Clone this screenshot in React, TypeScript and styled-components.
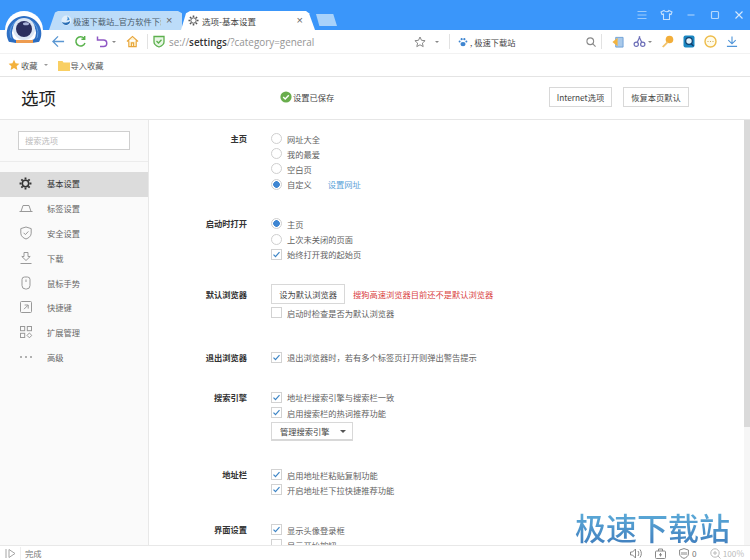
import React from 'react'
import styled, { createGlobalStyle } from 'styled-components'

const GlobalStyle = createGlobalStyle`
  html, body {
    margin: 0;
    padding: 0;
    background: #fff;
  }
  * {
    box-sizing: border-box;
  }
`

const sans = `"Noto Sans CJK SC", "Liberation Sans", sans-serif`

const Logo = () => (
  <LogoWrap>
    <svg width="40" height="36" viewBox="0 0 40 36">
      <circle cx="20" cy="19" r="19" fill="#fff" />
      <path d="M5 31 A17.300 17.300 0 1 1 35 31 L29 30 A12 12 0 1 0 11 30 Z" fill="#2f70c4" />
      <path d="M9 30.500 A14 14 0 1 1 31 30.500" fill="none" stroke="#5f9de0" strokeWidth="1" />
      <circle cx="20" cy="18" r="11" fill="#dbe6f4" />
      <circle cx="20" cy="18" r="8" fill="#2b2f5e" />
      <ellipse cx="22" cy="12.800" rx="3" ry="1.500" fill="#aab4d8" />
      <path d="M4 26 L12 29 L12 32 L6 31 Z M36 26 L28 29 L28 32 L34 31 Z" fill="#2a6cc0" />
      <rect x="12" y="29" width="17" height="3" fill="#ee9c50" />
    </svg>
  </LogoWrap>
)

const GearIcon = ({ size = 13, color = '#444', weight = 1.6 }: { size?: number; color?: string; weight?: number }) => (
  <svg width={size} height={size} viewBox="0 0 14 14">
    <circle cx="7" cy="7" r="3.400" fill="none" stroke={color} strokeWidth={weight} />
    <g stroke={color} strokeWidth="2">
      <path d="M7 .6v2.200M7 11.200v2.200M.6 7h2.200M11.200 7h2.200M2.500 2.500l1.500 1.500M10 10l1.500 1.500M2.500 11.500L4 10M10 4l1.500-1.500" />
    </g>
  </svg>
)

const navIcons: Record<string, React.ReactNode> = {
  gear: <GearIcon size={13} color="#333" />,
  tab: (
    <svg width="14" height="14" viewBox="0 0 14 14" fill="none" stroke="#999">
      <path d="M.5 10.500h13M2 10.500L4 4.500h6l2 6" />
    </svg>
  ),
  shield: (
    <svg width="14" height="14" viewBox="0 0 14 14" fill="none" stroke="#999">
      <path d="M7 1l5.200 1.600v4.600c0 3-2.600 4.900-5.200 5.800-2.600-.9-5.200-2.800-5.200-5.800V2.600zM4.600 6.800l1.800 1.800 3-3.200" />
    </svg>
  ),
  download: (
    <svg width="14" height="14" viewBox="0 0 14 14" fill="none" stroke="#999">
      <path d="M5 1.500h4v4h2.200L7 9.500 2.800 5.500H5zM1.500 12.500h11" />
    </svg>
  ),
  mouse: (
    <svg width="14" height="14" viewBox="0 0 14 14" fill="none" stroke="#999">
      <path d="M3 3.500A2.500 2.500 0 0 1 5.500 1h3A2.500 2.500 0 0 1 11 3.500v6a3.500 3.500 0 0 1-3.500 3.500h-1A3.500 3.500 0 0 1 3 9.500zM7 3.500v2.500" />
    </svg>
  ),
  key: (
    <svg width="14" height="14" viewBox="0 0 14 14" fill="none" stroke="#999">
      <rect x="1.500" y="1.500" width="11" height="11" rx="1" />
      <path d="M5 9.200L9 5.200M5.600 5h3.600v3.600" />
    </svg>
  ),
  ext: (
    <svg width="14" height="14" viewBox="0 0 14 14" fill="none" stroke="#999">
      <rect x="1.500" y="1.500" width="4.200" height="4.200" />
      <rect x="8.300" y="1.500" width="4.200" height="4.200" />
      <rect x="1.500" y="8.300" width="4.200" height="4.200" />
      <path d="M10.400 8l2.400 2.400-2.400 2.400L8 10.400z" />
    </svg>
  ),
  more: (
    <svg width="14" height="14" viewBox="0 0 14 14" fill="#999">
      <circle cx="2" cy="7" r="1" />
      <circle cx="7" cy="7" r="1" />
      <circle cx="12" cy="7" r="1" />
    </svg>
  ),
}

const navList = [
  { id: 1, icon: 'gear', text: '基本设置', active: true },
  { id: 2, icon: 'tab', text: '标签设置' },
  { id: 3, icon: 'shield', text: '安全设置' },
  { id: 4, icon: 'download', text: '下载' },
  { id: 5, icon: 'mouse', text: '鼠标手势' },
  { id: 6, icon: 'key', text: '快捷键' },
  { id: 7, icon: 'ext', text: '扩展管理' },
  { id: 8, icon: 'more', text: '高级' },
]

const Radio = ({ on, label, children }: { on?: boolean; label: string; children?: React.ReactNode }) => (
  <Row>
    <RadioMark $on={on} />
    <RowText>{label}</RowText>
    {children}
  </Row>
)

const Check = ({ on = true, label }: { on?: boolean; label: string }) => (
  <Row>
    <CheckMark>
      {on && (
        <svg width="9" height="9" viewBox="0 0 9 9" fill="none" stroke="#3d85c6" strokeWidth="1.200">
          <path d="M1.500 4.600l2 2 4-4.400" />
        </svg>
      )}
    </CheckMark>
    <RowText>{label}</RowText>
  </Row>
)

const App: React.FC = () => {
  return (
    <>
      <GlobalStyle />
      <Page>
        <Logo />
        <TitleBar>
          <Tabs>
            <BackTab>
              <svg width="11" height="11" viewBox="0 0 11 11">
                <circle cx="5.500" cy="5.500" r="5" fill="#dfeefb" />
                <path d="M1 7c2 1 6 1 8-1 .4 2.400-2 4-4 4-2 0-3.400-1.400-4-3z" fill="#2b6fb5" />
                <path d="M6 1.500c1 1 1 3-.5 4l3-.5c0-2-1-3-2.500-3.500z" fill="#3e8ed6" />
              </svg>
              <BackTabTitle>极速下载站_官方软件下载</BackTabTitle>
              <TabClose>×</TabClose>
            </BackTab>
            <ActiveTab>
              <GearIcon size={11} color="#555" weight={1.2} />
              <ActiveTabTitle>选项-基本设置</ActiveTabTitle>
              <TabClose>×</TabClose>
            </ActiveTab>
            <NewTab />
          </Tabs>
          <WindowButtons>
            <svg width="12" height="12" viewBox="0 0 12 12" stroke="#9ccbfb" fill="none">
              <path d="M1.500 2.500h9M1.500 6h9M1.500 9.500h9" />
            </svg>
            <svg width="13" height="12" viewBox="0 0 13 12" stroke="#c6e1fd" fill="none" strokeWidth="1.100">
              <path d="M4 1.500L1 3l1 2.500 1.500-.5v5.500h6V5l1.500.5 1-2.500-3-1.500c-.5 1.600-4 1.600-5 0z" />
            </svg>
            <svg width="12" height="12" viewBox="0 0 12 12" stroke="#b5d8fc" fill="none">
              <path d="M2.500 6h7" />
            </svg>
            <svg width="12" height="12" viewBox="0 0 12 12" stroke="#b5d8fc" fill="none" strokeWidth="1.200">
              <rect x="2.500" y="2.500" width="7" height="7" rx="1" />
            </svg>
            <svg width="12" height="12" viewBox="0 0 12 12" stroke="#d5e9fd" fill="none" strokeWidth="1.100">
              <path d="M2.500 2.500l7 7M9.500 2.500l-7 7" />
            </svg>
          </WindowButtons>
        </TitleBar>

        <ToolBar>
          <NavIcons>
            <svg width="13" height="13" viewBox="0 0 14 13" fill="none" stroke="#5a96d2" strokeWidth="1.400">
              <path d="M13 6.500H1.500M6.500 1L1 6.500 6.500 12" />
            </svg>
            <svg width="13" height="13" viewBox="0 0 14 14" fill="none" stroke="#59b24c" strokeWidth="1.600">
              <path d="M11.800 8.500A5 5 0 1 1 10.800 3.500M11.500 1v3.500H8" />
            </svg>
            <UndoGroup>
              <svg width="13" height="13" viewBox="0 0 13 13" fill="none" stroke="#8f57c4" strokeWidth="1.500">
                <path d="M1.500 1.500v3.500h6a3 3 0 0 1 0 6.500H4" />
              </svg>
              <Caret />
            </UndoGroup>
            <svg width="13" height="13" viewBox="0 0 14 14" fill="#fdf3d4" stroke="#e8a53a" strokeWidth="1.200">
              <path d="M1 7l6-5.500L13 7M3 5.500V12.500h8V5.500" />
              <path d="M5.800 12.500V8.500h2.400v4" fill="none" />
            </svg>
          </NavIcons>
          <VLine />
          <ShieldSlot>
            <svg width="12" height="13" viewBox="0 0 12 13" fill="#e9f7e6" stroke="#5db04e" strokeWidth="1.300">
              <path d="M1 1.500h10v5.500c0 2.500-2.500 4-5 5-2.500-1-5-2.500-5-5z" />
              <path d="M3.500 6l2 2 3-3.200" fill="none" />
            </svg>
          </ShieldSlot>
          <Url>
            se://<b>settings</b>/?category=general
          </Url>
          <StarGroup>
            <svg width="12" height="12" viewBox="0 0 12 12" fill="none" stroke="#888">
              <path d="M6 1l1.500 3.300 3.600.4-2.700 2.400.8 3.500L6 8.800l-3.200 1.800.8-3.500L.9 4.700l3.600-.4z" />
            </svg>
            <Caret />
          </StarGroup>
          <VLine />
          <SearchBox>
            <svg width="10" height="10" viewBox="0 0 11 11" fill="#3e85d0">
              <ellipse cx="5.500" cy="7.800" rx="2.800" ry="2.400" />
              <circle cx="1.800" cy="5" r="1.100" />
              <circle cx="4" cy="2.400" r="1.200" />
              <circle cx="7" cy="2.400" r="1.200" />
              <circle cx="9.200" cy="5" r="1.100" />
            </svg>
            <SearchText>, 极速下载站</SearchText>
            <svg width="10" height="10" viewBox="0 0 11 11" fill="none" stroke="#8a8a8a" strokeWidth="1.200">
              <circle cx="4.700" cy="4.700" r="3.700" />
              <path d="M7.500 7.500l3 3" />
            </svg>
          </SearchBox>
          <VLine />
          <ExtIcons>
            <svg width="12" height="12" viewBox="0 0 13 13">
              <path d="M4 1.500h8v10.500H4z" fill="#a9c9ea" stroke="#6fa1d6" />
              <path d="M0.500 6.500L6 2v9z" fill="#f3b33f" />
            </svg>
            <ScissorGroup>
              <svg width="13" height="13" viewBox="0 0 14 13" fill="none" stroke="#6d6fb8" strokeWidth="1.300">
                <circle cx="3.500" cy="9.500" r="2.300" />
                <circle cx="10.500" cy="9.500" r="2.300" />
                <path d="M4.500 7.500L7.500 1M9.500 7.500L6.500 1" />
              </svg>
              <Caret />
            </ScissorGroup>
            <svg width="13" height="13" viewBox="0 0 13 13">
              <circle cx="8.500" cy="4.500" r="3.800" fill="#f2ae3a" />
              <path d="M6 6.500L1 11.500l1.500 1 5-5z" fill="#f2c26a" />
            </svg>
            <svg width="12" height="13" viewBox="0 0 12 13">
              <rect x=".5" y=".5" width="11" height="12" rx="2" fill="#1a87c2" />
              <circle cx="6" cy="6" r="3.300" fill="#dff1fb" stroke="#103f6e" strokeWidth="1.200" />
              <path d="M8 8.500l2.500 2.500" stroke="#103f6e" strokeWidth="1.200" />
            </svg>
            <svg width="13" height="13" viewBox="0 0 13 13">
              <circle cx="6.500" cy="6.500" r="5.500" fill="#fffbe9" stroke="#eebc4a" strokeWidth="1.400" />
              <g fill="#c9a04a">
                <circle cx="4" cy="6.500" r=".6" />
                <circle cx="6.500" cy="6.500" r=".6" />
                <circle cx="9" cy="6.500" r=".6" />
              </g>
            </svg>
            <svg width="12" height="13" viewBox="0 0 13 13" fill="none" stroke="#4f94d8" strokeWidth="1.200">
              <path d="M6.500 1v7.500M2.500 5l4 4 4-4M1 11.800h11" />
            </svg>
          </ExtIcons>
        </ToolBar>

        <BookmarkBar>
          <svg width="12" height="12" viewBox="0 0 12 12" fill="#f3b13c">
            <path d="M6 .8l1.600 3.500 3.800.4-2.800 2.500.8 3.800L6 8.900 2.600 11l.8-3.800L.6 4.700l3.800-.4z" />
          </svg>
          <BookmarkText>收藏</BookmarkText>
          <Caret />
          <FolderIcon>
            <svg width="12" height="11" viewBox="0 0 12 11" fill="#f9cf63">
              <path d="M0 1h4.500l1 1.500H12V11H0z" />
            </svg>
          </FolderIcon>
          <BookmarkText>导入收藏</BookmarkText>
        </BookmarkBar>

        <Header>
          <PageTitle>选项</PageTitle>
          <Saved>
            <svg width="12" height="12" viewBox="0 0 12 12">
              <circle cx="6" cy="6" r="5.600" fill="#69ad4c" />
              <path d="M3.200 6l2 2 3.600-3.800" fill="none" stroke="#fff" strokeWidth="1.400" />
            </svg>
            <span>设置已保存</span>
          </Saved>
          <HeaderButton $width={63}>Internet选项</HeaderButton>
          <HeaderButton $width={66}>恢复本页默认</HeaderButton>
        </Header>

        <Body>
          <Sidebar>
            <SearchArea>
              <SearchInput placeholder="搜索选项" readOnly />
            </SearchArea>
            <NavList>
              {navList.map((item) => (
                <NavItem key={item.id} $active={item.active}>
                  <NavIcon>{navIcons[item.icon]}</NavIcon>
                  <span>{item.text}</span>
                </NavItem>
              ))}
            </NavList>
          </Sidebar>

          <Main>
            <Section $gap={11}>
              <SectionLabel>主页</SectionLabel>
              <Rows>
                <Radio label="网址大全" />
                <Radio label="我的最爱" />
                <Radio label="空白页" />
                <Radio on label="自定义">
                  <LinkText>设置网址</LinkText>
                </Radio>
              </Rows>
            </Section>

            <Section $gap={24.6}>
              <SectionLabel>启动时打开</SectionLabel>
              <Rows>
                <Radio on label="主页" />
                <Radio label="上次未关闭的页面" />
                <Check label="始终打开我的起始页" />
              </Rows>
            </Section>

            <Section $gap={22}>
              <SectionLabel $top={3}>默认浏览器</SectionLabel>
              <Rows>
                <ButtonRow>
                  <PlainButton>设为默认浏览器</PlainButton>
                  <Warning>搜狗高速浏览器目前还不是默认浏览器</Warning>
                </ButtonRow>
                <Check on={false} label="启动时检查是否为默认浏览器" />
              </Rows>
            </Section>

            <Section $gap={29.5}>
              <SectionLabel>退出浏览器</SectionLabel>
              <Rows>
                <Check label="退出浏览器时，若有多个标签页打开则弹出警告提示" />
              </Rows>
            </Section>

            <Section $gap={25}>
              <SectionLabel>搜索引擎</SectionLabel>
              <Rows>
                <Check label="地址栏搜索引擎与搜索栏一致" />
                <Check label="启用搜索栏的热词推荐功能" />
                <SelectButton>
                  管理搜索引擎
                  <SelectCaret />
                </SelectButton>
              </Rows>
            </Section>

            <Section $gap={26}>
              <SectionLabel>地址栏</SectionLabel>
              <Rows>
                <Check label="启用地址栏粘贴复制功能" />
                <Check label="开启地址栏下拉快捷推荐功能" />
              </Rows>
            </Section>

            <Section $gap={24.5}>
              <SectionLabel>界面设置</SectionLabel>
              <Rows>
                <Check label="显示头像登录框" />
                <Check on={false} label="显示开始按钮" />
              </Rows>
            </Section>
          </Main>
          <ScrollTrack>
            <ScrollThumb />
          </ScrollTrack>
        </Body>

        <Watermark>极速下载站</Watermark>

        <StatusBar>
          <StatusLeft>
            <svg width="11" height="11" viewBox="0 0 11 11" fill="none" stroke="#a5a5a5">
              <path d="M1 1v9M4 1.500l6 4-6 4z" />
            </svg>
            <StatusDivider />
            <span>完成</span>
          </StatusLeft>
          <StatusRight>
            <svg width="12" height="11" viewBox="0 0 12 11" fill="none" stroke="#888">
              <path d="M.5 4h2l3-3v9l-3-3h-2zM8 3c1 1.500 1 3.500 0 5M10 1.500c1.800 2.500 1.800 5.500 0 8" />
            </svg>
            <svg width="11" height="11" viewBox="0 0 11 11" fill="none" stroke="#888">
              <rect x=".5" y="3" width="10" height="7.500" rx="1" />
              <path d="M3.500 3V1h4v2" />
              <path d="M5.500 5v3.500M4 6.800h3" />
            </svg>
            <ShieldCount>
              <svg width="10" height="11" viewBox="0 0 10 11" fill="none" stroke="#888">
                <path d="M5 .6l4.400 1.400v4c0 2.200-2.200 3.500-4.400 4.400C2.800 9.500.6 8.200.6 6V2z" />
                <path d="M3 4v3M5 4v3M7 4v3" />
              </svg>
              <span>0</span>
            </ShieldCount>
            <ZoomValue>
              <svg width="11" height="11" viewBox="0 0 11 11" fill="none" stroke="#bbb">
                <circle cx="5" cy="5" r="4.200" />
                <path d="M8 8l2.500 2.500M3 5h4M5 3v4" />
              </svg>
              <span>100%</span>
            </ZoomValue>
          </StatusRight>
        </StatusBar>
      </Page>
    </>
  )
}

export default App

const Page = styled.div`
  position: relative;
  width: 750px;
  height: 560px;
  overflow: hidden;
  display: flex;
  flex-direction: column;
  background: #fff;
  font-family: ${sans};
  font-size: 8.25px;
  color: #555;
`

const LogoWrap = styled.div`
  position: absolute;
  left: 4px;
  top: 11px;
  width: 40px;
  height: 36px;
  z-index: 3;
  svg {
    display: block;
  }
`

const TitleBar = styled.div`
  flex: none;
  height: 30px;
  display: flex;
  align-items: flex-end;
  justify-content: space-between;
  background: #3a96fa;
`

const Tabs = styled.div`
  display: flex;
  align-items: flex-end;
  padding-left: 49px;
`

const BackTab = styled.div`
  width: 133px;
  height: 19px;
  display: flex;
  align-items: center;
  padding: 0 8px 0 12px;
  background: #bcdcf9;
  clip-path: polygon(0 100%, 6px 8%, 9px 0, calc(100% - 4px) 0, 100% 12%, 100% 100%);
  color: #4a5b6a;
`

const BackTabTitle = styled.span`
  margin: 0 5px 0 1px;
  width: 88px;
  white-space: nowrap;
  overflow: hidden;
  flex: none;
`

const ActiveTab = styled.div`
  width: 134px;
  height: 19px;
  margin-left: -1px;
  display: flex;
  align-items: center;
  padding: 0 12px 0 7px;
  background: #fff;
  clip-path: polygon(0 100%, 5px 12%, 9px 0, calc(100% - 9px) 0, calc(100% - 6px) 12%, 100% 100%);
  color: #444;
  font-size: 8.5px;
  z-index: 1;
`

const ActiveTabTitle = styled.span`
  margin-left: 3px;
  flex: 1;
`

const TabClose = styled.span`
  flex: none;
  font-family: "Liberation Sans", sans-serif;
  font-size: 11px;
  line-height: 1;
  color: #666;
`

const NewTab = styled.div`
  width: 21px;
  height: 12px;
  margin: 0 0 4px 1px;
  background: #a8d2fa;
  clip-path: polygon(0 0, 82% 0, 100% 100%, 16% 100%);
`

const WindowButtons = styled.div`
  display: flex;
  align-items: center;
  gap: 12px;
  padding: 0 5px 9px 0;
  svg {
    display: block;
  }
`

const ToolBar = styled.div`
  flex: none;
  height: 23px;
  display: flex;
  align-items: center;
  padding: 0 8px 0 52px;
  background: #fff;
  svg {
    display: block;
    flex: none;
  }
`

const NavIcons = styled.div`
  display: flex;
  align-items: center;
  gap: 9px;
  width: 95px;
`

const UndoGroup = styled.div`
  display: flex;
  align-items: center;
  gap: 3px;
  margin-right: 1px;
`

const Caret = styled.i`
  display: inline-block;
  flex: none;
  width: 0;
  height: 0;
  border-left: 2px solid transparent;
  border-right: 2px solid transparent;
  border-top: 2.5px solid #888;
`

const VLine = styled.div`
  flex: none;
  width: 1px;
  height: 15px;
  background: #e2e2e2;
`

const ShieldSlot = styled.div`
  flex: none;
  margin-left: 5px;
`

const Url = styled.div`
  width: 245px;
  margin-left: 4px;
  font-family: "Open Sans", sans-serif;
  font-size: 9.9px;
  color: #949494;
  white-space: nowrap;
  b {
    font-weight: 600;
    color: #333;
  }
`

const StarGroup = styled.div`
  display: flex;
  align-items: center;
  gap: 9px;
  width: 35px;
`

const SearchBox = styled.div`
  display: flex;
  align-items: center;
  width: 151px;
  padding: 0 5px 0 8px;
`

const SearchText = styled.span`
  flex: 1;
  margin-left: 2px;
  color: #444;
`

const ExtIcons = styled.div`
  display: flex;
  align-items: center;
  gap: 9px;
  padding-left: 10px;
`

const ScissorGroup = styled.div`
  display: flex;
  align-items: center;
  gap: 2px;
`

const BookmarkBar = styled.div`
  flex: none;
  height: 24px;
  display: flex;
  align-items: center;
  padding-left: 8px;
  background: #fff;
  border-top: 1px solid #f2f2f2;
  border-bottom: 1px solid #e4e4e4;
  color: #555;
  svg {
    display: block;
  }
  ${Caret} {
    margin-left: 6px;
    border-top-color: #999;
  }
`

const BookmarkText = styled.span`
  margin-left: 1px;
`

const FolderIcon = styled.div`
  margin-left: 10px;
`

const Header = styled.div`
  flex: none;
  height: 43px;
  display: flex;
  align-items: center;
  padding: 0 61px 2px 21px;
  background: #fff;
  border-bottom: 1px solid #e6e6e6;
`

const PageTitle = styled.h1`
  width: 259px;
  margin: 0;
  font-size: 17.5px;
  font-weight: 400;
  color: #222;
`

const Saved = styled.div`
  display: flex;
  align-items: center;
  gap: 1px;
  width: 269px;
  color: #444;
`

const HeaderButton = styled.div<{ $width: number }>`
  width: ${(p) => p.$width}px;
  height: 20px;
  margin-right: 11px;
  display: flex;
  align-items: center;
  justify-content: center;
  border: 1px solid #d8d8d8;
  color: #444;
  &:last-child {
    margin-right: 0;
  }
`

const Body = styled.div`
  flex: 1;
  min-height: 0;
  display: flex;
`

const Sidebar = styled.div`
  flex: none;
  width: 149px;
  background: #fafafa;
  border-right: 1px solid #e8e8e8;
`

const SearchArea = styled.div`
  height: 42px;
  padding: 11px 0 0 18px;
  border-bottom: 1px solid #ececec;
`

const SearchInput = styled.input`
  display: block;
  width: 112px;
  height: 19px;
  padding: 0 6px 2px;
  border: 1px solid #cfcfcf;
  outline: none;
  background: #fff;
  font-family: ${sans};
  font-size: 8.25px;
  &::placeholder {
    color: #bbb;
  }
`

const NavList = styled.div`
  padding-top: 10px;
`

const NavItem = styled.div<{ $active?: boolean }>`
  height: 24.8px;
  display: flex;
  align-items: center;
  padding: 0 0 2px 19px;
  background: ${(p) => (p.$active ? '#dcdcdc' : 'transparent')};
  color: ${(p) => (p.$active ? '#333' : '#666')};
`

const NavIcon = styled.div`
  width: 28px;
  flex: none;
  svg {
    display: block;
  }
`

const Main = styled.div`
  flex: 1;
  min-width: 0;
  overflow: hidden;
`

const Section = styled.div<{ $gap: number }>`
  display: flex;
  margin-top: ${(p) => p.$gap}px;
`

const SectionLabel = styled.div<{ $top?: number }>`
  flex: none;
  width: 98px;
  height: 15.2px;
  margin-top: ${(p) => p.$top || 0}px;
  line-height: 15.2px;
  text-align: right;
  font-weight: 700;
  color: #333;
`

const Rows = styled.div`
  margin-left: 24px;
`

const Row = styled.div`
  height: 15.2px;
  display: flex;
  align-items: center;
`

const RowText = styled.span`
  margin-left: 5px;
  color: #5f5f5f;
  white-space: nowrap;
`

const RadioMark = styled.i<{ $on?: boolean }>`
  flex: none;
  width: 11px;
  height: 11px;
  border-radius: 50%;
  border: 1px solid #cfcfcf;
  background: ${(p) =>
    p.$on ? 'radial-gradient(circle, #3f86d2 0 3px, #fff 3.6px)' : '#fff'};
`

const CheckMark = styled.i`
  flex: none;
  width: 11px;
  height: 11px;
  display: flex;
  align-items: center;
  justify-content: center;
  border: 1px solid #d2d2d2;
  background: #fff;
`

const LinkText = styled.span`
  margin-left: 16px;
  color: #5aa2d8;
`

const ButtonRow = styled.div`
  height: 21px;
  display: flex;
  align-items: center;
`

const PlainButton = styled.div`
  width: 74px;
  height: 20px;
  display: flex;
  align-items: center;
  justify-content: center;
  border: 1px solid #d8d8d8;
  color: #444;
`

const Warning = styled.span`
  margin-left: 8px;
  color: #d9433f;
`

const SelectButton = styled.div`
  width: 82px;
  height: 19px;
  margin-top: 2px;
  display: flex;
  align-items: center;
  padding-left: 8px;
  border: 1px solid #d8d8d8;
  border-bottom-width: 2px;
  color: #444;
`

const SelectCaret = styled.i`
  margin-left: 10px;
  width: 0;
  height: 0;
  border-left: 3px solid transparent;
  border-right: 3px solid transparent;
  border-top: 3px solid #555;
`

const ScrollTrack = styled.div`
  flex: none;
  width: 6px;
  background: #f6f6f6;
`

const ScrollThumb = styled.div`
  height: 307px;
  background: #dadada;
`

const Watermark = styled.div`
  position: absolute;
  right: 20px;
  top: 504px;
  font-size: 31px;
  line-height: 46px;
  font-weight: 500;
  letter-spacing: 0;
  background: linear-gradient(#63b6df, #3c78ba);
  -webkit-background-clip: text;
  background-clip: text;
  color: transparent;
  z-index: 2;
`

const StatusBar = styled.div`
  flex: none;
  height: 15px;
  display: flex;
  align-items: center;
  justify-content: space-between;
  padding: 0 6px 0 5px;
  background: #fff;
  border-top: 1px solid #e8e8e8;
  color: #777;
  z-index: 3;
  svg {
    display: block;
  }
`

const StatusLeft = styled.div`
  display: flex;
  align-items: center;
  gap: 4px;
`

const StatusDivider = styled.i`
  width: 1px;
  height: 13px;
  background: #eee;
`

const StatusRight = styled.div`
  display: flex;
  align-items: center;
  gap: 13px;
`

const ShieldCount = styled.div`
  display: flex;
  align-items: center;
  gap: 3px;
`

const ZoomValue = styled.div`
  display: flex;
  align-items: center;
  gap: 2px;
  color: #bbb;
`
